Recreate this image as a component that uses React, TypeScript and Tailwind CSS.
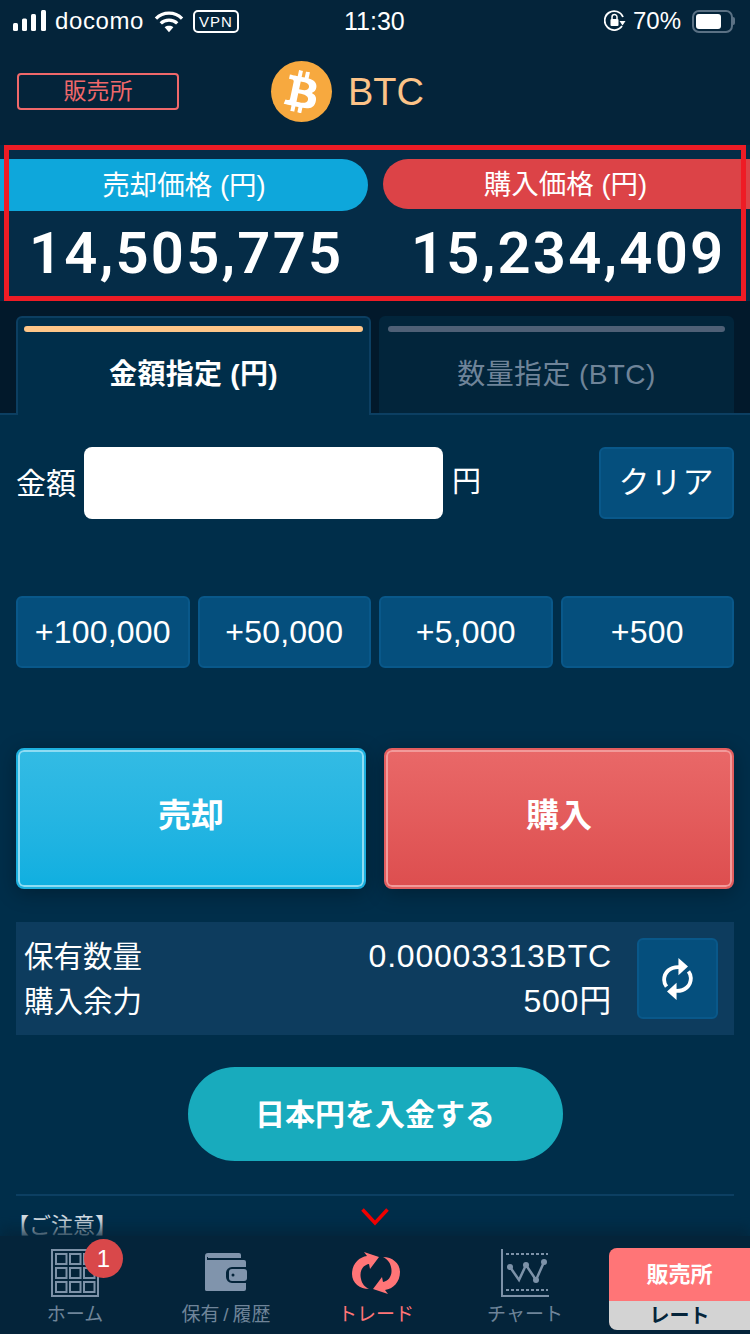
import type { ReactNode } from "react";
import { FaBtc } from "react-icons/fa";

const font = { fontFamily: '"Liberation Sans", "Noto Sans CJK JP", sans-serif' };

const amounts = ["+100,000", "+50,000", "+5,000", "+500"];

function StatusBar() {
  return (
    <div className="relative flex h-[42px] items-center justify-between pl-[13px] pr-[15px] text-[24px] leading-none text-white">
      <div className="flex items-center">
        <svg width="33" height="22" viewBox="0 0 33 22" fill="white">
          <rect x="0" y="13" width="5" height="8" rx="1.500" />
          <rect x="9" y="8.500" width="5" height="12.500" rx="1.500" />
          <rect x="18" y="4" width="5" height="17" rx="1.500" />
          <rect x="28" y="0" width="5" height="21" rx="1.500" />
        </svg>
        <span className="ml-[9px] tracking-[0.6px]">docomo</span>
        <svg className="ml-[10px]" width="30" height="23" viewBox="0 0 31 23" fill="none" stroke="white" strokeWidth="3.400">
          <path d="M2 8.500C9.500 1 21.500 1 29 8.500" />
          <path d="M7 13.500C11.500 9 19.500 9 24 13.500" />
          <path d="M15.500 22.500 L11 17.500C13.500 15.500 17.500 15.500 20 17.500Z" fill="white" stroke="none" />
        </svg>
        <span className="ml-[9px] rounded-[5px] border-2 border-white px-[4px] py-[2px] text-[15px] tracking-[1px]">VPN</span>
      </div>
      <span className="absolute left-[344px] text-[25px]">11:30</span>
      <div className="flex items-center">
        <svg width="22" height="24" viewBox="0 0 22 24" fill="none">
          <path d="M18 17A9.500 9.500 0 1 1 19 8" stroke="white" strokeWidth="1.800" />
          <path d="M15.500 12h6l-3 4.500z" fill="white" />
          <rect x="6.500" y="10" width="8" height="7" rx="1" fill="white" />
          <path d="M8 10V8a2.500 2.500 0 0 1 5 0v2" stroke="white" strokeWidth="1.500" />
        </svg>
        <span className="ml-[7px]">70%</span>
        <div className="ml-[11px] flex h-[23px] w-[41px] items-center rounded-[7px] border-2 border-[#5b7184] p-[2px]">
          <div className="h-full w-[25px] rounded-[3px] bg-white" />
        </div>
        <div className="h-[8px] w-[2px] rounded-r bg-[#5b7184]" />
      </div>
    </div>
  );
}

function Header() {
  return (
    <div className="flex h-[103px] items-center pl-[17px] pb-[4px]">
      <div className="flex h-[37px] w-[162px] items-center justify-center rounded-[4px] border-2 border-[#f0686a] text-[23px] text-[#f0686a]">
        販売所
      </div>
      <div className="ml-[92px] flex h-[61px] w-[61px] items-center justify-center rounded-full bg-[#f7a93f]">
        <FaBtc className="rotate-[12deg] text-white" size={42} />
      </div>
      <span className="ml-[16px] text-[38px] font-medium leading-none text-[#fcc388]">BTC</span>
    </div>
  );
}

function Prices() {
  const num = "font-['Roboto'] text-[58px] font-semibold leading-[66px] tracking-[2.200px]";
  return (
    <div className="relative h-[156px] bg-[#052c47] pt-[14px]">
      <div className="grid grid-cols-[368px_367px] gap-x-[15px] text-white">
        <div>
          <div className="flex h-[52px] items-center justify-center rounded-r-[26px] bg-[#0ea7db] pt-[2px] text-[27.500px] leading-none">売却価格 (円)</div>
          <div className={`pl-[29px] pt-[9px] ${num}`}>14,505,775</div>
        </div>
        <div>
          <div className="flex h-[50px] items-center justify-center rounded-l-[26px] bg-[#dc4347] pr-[2px] pt-[2px] text-[27.500px] leading-none">購入価格 (円)</div>
          <div className={`pl-[28px] pt-[11px] ${num}`}>15,234,409</div>
        </div>
      </div>
      <div className="pointer-events-none absolute inset-x-[4px] inset-y-0 border-[5px] border-[#ee1c25]" />
    </div>
  );
}

function Tabs() {
  return (
    <div className="flex h-[112px] items-end gap-[8px] bg-[#02192b] px-[16px]">
      <div className="relative z-10 -mb-[2px] h-[99px] w-[355px] rounded-t-[6px] border-2 border-b-0 border-[#0c3f62] bg-[#002e4a] px-[6px] pt-[8px] text-center">
        <div className="h-[6px] rounded-full bg-[#fdc689]" />
        <div className="pt-[24px] text-[28px] font-bold leading-[38px] tracking-[0.300px] text-white">金額指定 (円)</div>
      </div>
      <div className="h-[97px] w-[355px] rounded-t-[6px] bg-[#02253b] px-[9px] pt-[10px] text-center">
        <div className="h-[6px] rounded-full bg-[#4f6076]" />
        <div className="pt-[24px] text-[28px] leading-[38px] tracking-[0.400px] text-[#6f8499]">数量指定 (BTC)</div>
      </div>
    </div>
  );
}

function RefreshIcon() {
  return (
    <svg width="33" height="42" viewBox="0 0 34 44" fill="none">
      <path d="M19 9.500C9 9 3 15 3 23c0 3 1 5 2.500 7" stroke="white" strokeWidth="4" />
      <path d="M18 0l10 9-10 9z" fill="white" />
      <path d="M15 34.500C25 35 31 29 31 21c0-3-1-5-2.500-7" stroke="white" strokeWidth="4" />
      <path d="M16 44L6 35l10-9z" fill="white" />
    </svg>
  );
}

function Panel() {
  return (
    <div className="min-h-0 flex-1 overflow-hidden border-t-2 border-[#0c3f62] bg-[#002e4a] px-[16px] pt-[32px] text-white">
      <div className="flex h-[72px] items-center">
        <span className="text-[30px]">金額</span>
        <div className="ml-[8px] h-full w-[359px] rounded-[8px] bg-white" />
        <span className="ml-[9px] text-[29px]">円</span>
        <button className="ml-auto h-full w-[135px] rounded-[6px] border-2 border-[#09588a] bg-[#054f7d] text-[31px] tracking-[1px]">クリア</button>
      </div>

      <div className="mt-[77px] grid grid-cols-4 gap-[8px]">
        {amounts.map((a) => (
          <button key={a} className="h-[72px] rounded-[6px] border-2 border-[#09588a] bg-[#054f7d] text-[32px] tracking-[0.200px]">
            {a}
          </button>
        ))}
      </div>

      <div className="mt-[80px] grid grid-cols-2 gap-[18px]">
        <button className="h-[141px] rounded-[8px] border-2 border-[#1db0de] bg-gradient-to-b from-[#33bbe4] to-[#0fafe0] pb-[6px] text-[33px] font-bold shadow-[inset_0_0_0_2px_#8edcf3,0_4px_20px_rgba(0,0,0,0.3)]">
          売却
        </button>
        <button className="h-[141px] rounded-[8px] border-2 border-[#e25d5e] bg-gradient-to-b from-[#e96868] to-[#dd4e4f] pb-[6px] text-[33px] font-bold shadow-[inset_0_0_0_2px_#f29a9a,0_4px_20px_rgba(0,0,0,0.3)]">
          購入
        </button>
      </div>

      <div className="mt-[33px] flex h-[113px] items-center bg-[#0d3c5e] pl-[8px] pr-[16px]">
        <div className="text-[29.500px] leading-[45px]">
          <div>保有数量</div>
          <div>購入余力</div>
        </div>
        <div className="ml-auto text-right text-[32px] leading-[45px] tracking-[0.800px]">
          <div>0.00003313BTC</div>
          <div>500円</div>
        </div>
        <button className="ml-[25px] flex h-[81px] w-[81px] items-center justify-center rounded-[6px] border-2 border-[#09588a] bg-[#054f7d]">
          <RefreshIcon />
        </button>
      </div>

      <button className="mx-auto mt-[32px] block h-[94px] w-[375px] rounded-full bg-[#18abbd] text-[30px] font-bold">日本円を入金する</button>

      <div className="mt-[33px] h-[2px] bg-[#0c3f62]" />
      <div className="-ml-[9px] pt-[15px] text-[22px] leading-[30px] text-[#d5dee4]">【ご注意】</div>
    </div>
  );
}

function HomeIcon() {
  return (
    <svg width="48" height="48" viewBox="0 0 48 48" fill="none" stroke="#7d92a8" strokeWidth="2">
      <rect x="1" y="1" width="46" height="46" />
      {[5, 19, 33].map((x) =>
        [5, 19, 33].map((y) => <rect key={`${x}-${y}`} x={x} y={y} width="10.500" height="10" />),
      )}
    </svg>
  );
}

function WalletIcon() {
  return (
    <svg width="42" height="40" viewBox="0 0 42 40" fill="#8094ac">
      <path d="M3 0h31a2 2 0 0 1 2 2v3H3V4H2V38h-0a2 2 0 0 1-2-2V3a3 3 0 0 1 3-3z" />
      <path d="M2 7h37a2 2 0 0 1 2 2v5H27a6 6 0 0 0-6 6v4a6 6 0 0 0 6 6h14v6a2 2 0 0 1-2 2H2a2 2 0 0 1-2-2V7z" />
      <rect x="24" y="16" width="18" height="12" rx="3" />
      <circle cx="28" cy="22" r="1.500" fill="#04243a" />
    </svg>
  );
}

function TradeIcon() {
  return (
    <svg width="50" height="42" viewBox="0 0 50 42" fill="#ff7577">
      <path d="M1 22C1 12 8 5 16 4l-3-4 15 5-9 12-1-5c-6 1-10 7-8 15 1 5 4 8 8 10C9 37 1 31 1 22z" />
      <path d="M49 20c0 10-7 17-15 18l3 4-15-5 9-12 1 5c6-1 10-7 8-15-1-5-4-8-8-10 9 0 17 6 17 15z" />
    </svg>
  );
}

function ChartIcon() {
  return (
    <svg width="48" height="48" viewBox="0 0 48 48" fill="none" stroke="#7d92a8">
      <path d="M1 0v47h48" strokeWidth="2" />
      <path d="M5 5h42M5 41h42" strokeWidth="2" strokeDasharray="3 2" />
      <path d="M9 18l9 13 7-15 10 15 8-18" strokeWidth="2.500" />
      <g fill="#7d92a8" stroke="none">
        <circle cx="9" cy="18" r="3" />
        <circle cx="25" cy="16" r="3" />
        <circle cx="35" cy="31" r="3" />
        <circle cx="43" cy="13" r="3" />
      </g>
    </svg>
  );
}

function NavItem({ icon, label, active, className }: { icon: ReactNode; label: string; active?: boolean; className: string }) {
  return (
    <div className={`flex flex-col items-center ${className}`}>
      <div className="flex h-[48px] items-center justify-center">{icon}</div>
      <div className={`mt-[5px] text-[19px] leading-[26px] whitespace-nowrap ${active ? "text-[#ff7577]" : "text-[#6f8499]"}`}>{label}</div>
    </div>
  );
}

function BottomNav() {
  return (
    <div className="relative z-10 flex h-[98px] items-start bg-[#04243a] pt-[13px] shadow-[0_-8px_12px_rgba(4,36,58,0.8)]">
      <div className="relative">
        <NavItem className="ml-[37px] w-[76px]" icon={<HomeIcon />} label="ホーム" />
        <div className="absolute left-[84px] top-[-10px] flex h-[39px] w-[39px] items-center justify-center rounded-full bg-[#d9484a] text-[24px] text-white">1</div>
      </div>
      <NavItem className="ml-[68px] w-[90px]" icon={<WalletIcon />} label={"保有\u2009/\u2009履歴"} />
      <NavItem className="ml-[60px] w-[90px]" icon={<TradeIcon />} label="トレード" active />
      <NavItem className="ml-[59px] w-[90px]" icon={<ChartIcon />} label="チャート" />
      <div className="absolute bottom-[4px] right-0 h-[82px] w-[141px] overflow-hidden rounded-l-[8px] text-center shadow-[inset_2px_2px_2px_rgba(120,50,50,0.5)]">
        <div className="flex h-[53px] items-center justify-center bg-[#ff7577] text-[22px] font-bold text-white">販売所</div>
        <div className="flex h-[29px] items-center justify-center bg-[#d3d3d3] text-[20px] font-bold text-[#04243a]">レート</div>
      </div>
    </div>
  );
}

export default function App() {
  return (
    <div className="relative flex h-[1334px] w-[750px] flex-col overflow-hidden bg-[#04243a]" style={font}>
      <StatusBar />
      <Header />
      <Prices />
      <Tabs />
      <Panel />
      <BottomNav />
      {/* scroll hint */}
      <svg className="absolute left-[361px] top-[1208px] z-20" width="28" height="18" viewBox="0 0 28 18" fill="none">
        <path d="M1.500 1.500L14 15 26.500 1.500" stroke="#f00000" strokeWidth="3.500" />
      </svg>
    </div>
  );
}
